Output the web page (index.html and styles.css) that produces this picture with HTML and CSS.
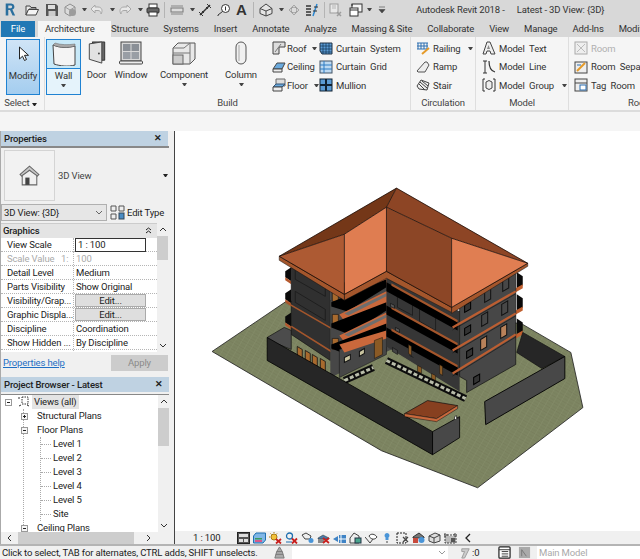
FILE: index.html
```html
<!DOCTYPE html>
<html lang="en">
<head>
<meta charset="utf-8">
<title>Autodesk Revit 2018</title>
<link rel="stylesheet" href="styles.css">
</head>
<body>
<header class="titlebar">
  <div class="qat">
    <svg class="q m6 wide" viewBox="0 0 14 16"><path d="M2 1h6.500a3.600 3.600 0 0 1 1.200 7L13 15h-3L7 8.500H5V15H2z" fill="#2a6f9e"/><path d="M5 3.400h3a1.500 1.500 0 0 1 0 3H5z" fill="#d8d8d8"/></svg>
    <svg class="q" viewBox="0 0 14 14"><path d="M1 3h4l1 1.500h5V6H4L1 12z" fill="#e8e8e8" stroke="#444"/><path d="M3.500 6.500H13.500L11 12H1z" fill="#f4f4f4" stroke="#444"/></svg>
    <svg class="q m4" viewBox="0 0 14 14"><path d="M1 1h10l2 2v10H1z" fill="#555"/><rect x="3" y="2" width="7" height="4" fill="#ddd"/><rect x="3.500" y="8" width="7" height="5" fill="#ccc"/></svg>
    <svg class="q m5 dim" viewBox="0 0 14 14"><path d="M2 4l5-3 5 3v6l-5 3-5-3z" fill="#ddd" stroke="#777"/><path d="M2 4l5 3 5-3M7 7v6" fill="none" stroke="#888"/><circle cx="9.500" cy="9.500" r="3.500" fill="#888"/></svg>
    <span class="arrow"></span>
    <svg class="q dim" viewBox="0 0 14 14"><path d="M5 2L1 6l4 4V7.500h3a3 3 0 0 1 3 3.500c2-3 1-7-3-7H5z" fill="#eee" stroke="#999"/></svg>
    <span class="arrow"></span>
    <svg class="q dim" viewBox="0 0 14 14"><path d="M9 2l4 4-4 4V7.500H6a3 3 0 0 0-3 3.500C1 8 2 4 6 4h3z" fill="#eee" stroke="#999"/></svg>
    <span class="arrow"></span>
    <svg class="q m4" viewBox="0 0 14 14"><rect x="3" y="1" width="8" height="4" fill="#fff" stroke="#333"/><rect x="1" y="5" width="12" height="5" rx="1" fill="#666" stroke="#333"/><rect x="3" y="9" width="8" height="4" fill="#fff" stroke="#333"/></svg>
    <span class="sep"></span>
    <svg class="q" viewBox="0 0 14 14"><path d="M1 3h12M1 11h12" stroke="#888" fill="none"/><rect x="1" y="5" width="12" height="4" fill="#ddd" stroke="#777"/></svg>
    <span class="arrow m3"></span>
    <svg class="q m5" viewBox="0 0 14 14"><path d="M2 12L12 2" stroke="#333" stroke-width="1.500"/><path d="M1 9l4 4M9 1l4 4M4 8l2 2M8 4l2 2" stroke="#333"/></svg>
    <svg class="q m5" viewBox="0 0 14 14"><circle cx="8.500" cy="5.500" r="4" fill="#fff" stroke="#333"/><path d="M8.500 3.500v4" stroke="#333"/><path d="M5.500 8.500L1 12v1" stroke="#333" fill="none"/></svg>
    <span class="bigA">A</span>
    <span class="sep"></span>
    <svg class="q" viewBox="0 0 14 14"><path d="M1 5.500L7 1l6 4.500v5L7 13l-6-2.500z" fill="#e4e4e4" stroke="#444"/><path d="M1 5.500L7 8l6-2.500M7 8v5" fill="none" stroke="#444"/></svg>
    <span class="arrow m3"></span>
    <svg class="q m4 dim" viewBox="0 0 14 14"><path d="M7 2l5 5-5 5-5-5z" fill="#eee" stroke="#999"/><circle cx="7" cy="7" r="3" fill="#ddd" stroke="#888"/></svg>
    <svg class="q m5" viewBox="0 0 14 14"><path d="M1 3h5M1 6h5M1 9h5M1 12h5" stroke="#333" stroke-width="1.300"/><path d="M8 13L12 1" stroke="#2b86d0" stroke-width="1.500"/><path d="M9 4h4M8 8h4" stroke="#333"/></svg>
    <span class="sep m4"></span>
    <svg class="q dim" viewBox="0 0 14 14"><rect x="1" y="1" width="8" height="9" fill="#eee" stroke="#888"/><path d="M3 3h4M3 5h4" stroke="#aaa"/><path d="M8 9l4 4M12 9l-4 4" stroke="#888" stroke-width="1.500"/></svg>
    <svg class="q m4" viewBox="0 0 14 14"><rect x="3" y="1" width="10" height="8" fill="#f4f4f4" stroke="#333"/><rect x="1" y="5" width="8" height="8" fill="#fff" stroke="#333"/><path d="M1 7h8M3 1v2" stroke="#333"/></svg>
    <span class="arrow m6"></span>
    <svg class="q cust" viewBox="0 0 8 8"><path d="M1 1h6M1 3.500h6L4 7z" fill="#444" stroke="#444" stroke-width=".6"/></svg>
  </div>
  <div class="title"><span>Autodesk Revit 2018 -</span><span>Latest - 3D View: {3D}</span></div>
</header>

<nav class="tabs">
  <span class="tab file">File</span>
  <span class="tab active">Architecture</span>
  <span class="tab">Structure</span>
  <span class="tab">Systems</span>
  <span class="tab">Insert</span>
  <span class="tab">Annotate</span>
  <span class="tab">Analyze</span>
  <span class="tab">Massing &amp; Site</span>
  <span class="tab">Collaborate</span>
  <span class="tab">View</span>
  <span class="tab">Manage</span>
  <span class="tab">Add-Ins</span>
  <span class="tab">Modify</span>
</nav>

<section class="ribbon">
  <div class="panel p-select">
    <div class="panel-body">
      <div class="modify">
        <svg class="cursor" viewBox="0 0 11 16"><path d="M1.500 1v12l3-2.800 2 4.300 2-1-2-4.200h4z" fill="#fff" stroke="#222"/></svg>
        <span>Modify</span>
      </div>
    </div>
    <div class="panel-label">Select <i class="arrow dark"></i></div>
  </div>
  <div class="panel p-build">
    <div class="panel-body">
      <div class="wall">
        <div class="wall-top">
          <svg viewBox="0 0 24 24" class="big"><path d="M1 3c7 3 15 3 22 1v19c-7 2-15 1-21-1z" fill="#f4f4f4" stroke="#444"/><path d="M1 3l2-2c6 2 13 2 20 1v2c-7 2-15 2-22-1z" fill="#aaa" stroke="#666" stroke-width=".5"/></svg>
        </div>
        <div class="wall-bot"><span>Wall</span><i class="arrow"></i></div>
      </div>
      <div class="tool t-door">
        <svg viewBox="0 0 18 26" class="big tall"><path d="M4 1h13v19H14z" fill="#666" stroke="#333"/><path d="M1 3l13-2v22L1 19z" fill="#e2e2e2" stroke="#444"/><circle cx="11" cy="13" r="1" fill="#444"/></svg>
        <span>Door</span>
      </div>
      <div class="tool t-window">
        <svg viewBox="0 0 24 24" class="big"><rect x="2" y="1" width="20" height="19" fill="#d8d8d8" stroke="#444"/><rect x="4" y="3" width="7.500" height="7" fill="#8a8f96"/><rect x="12.500" y="3" width="7.500" height="7" fill="#8a8f96"/><rect x="4" y="11" width="7.500" height="7" fill="#999ea5"/><rect x="12.500" y="11" width="7.500" height="7" fill="#999ea5"/><rect x="0.500" y="20" width="23" height="3" rx="1" fill="#eee" stroke="#444"/></svg>
        <span>Window</span>
      </div>
      <div class="tool t-comp">
        <svg viewBox="0 0 24 24" class="big"><path d="M1 7l5-5h17v16l-5 5H1z" fill="#e8e8e8" stroke="#555"/><path d="M6 12h12V2M1 12l5 0M18 12v11" fill="none" stroke="#777"/><path d="M1 7h11l6-5" fill="none" stroke="#777"/><rect x="1" y="14" width="10" height="9" fill="#ccc" stroke="#666"/></svg>
        <span>Component</span><i class="arrow"></i>
      </div>
      <div class="tool t-col">
        <svg viewBox="0 0 12 24" class="big thin"><rect x="1" y="1" width="10" height="22" rx="5" fill="#f0f0f0" stroke="#555"/><rect x="3" y="4" width="2" height="16" fill="#ccc"/></svg>
        <span>Column</span><i class="arrow"></i>
      </div>
      <div class="stack s-roof">
        <div class="small"><svg class="si" viewBox="0 0 14 14"><path d="M1 1h12v5H7v7H1z" fill="#ddd" stroke="#444"/><path d="M3 11L9 3" stroke="#777"/></svg><span>Roof</span><i class="arrow"></i></div>
        <div class="small"><svg class="si" viewBox="0 0 14 14"><path d="M1 9l4-6h8l-3 6z" fill="#6aa9dc" stroke="#444"/><path d="M1 9h9v3H1z" fill="#eee" stroke="#444"/></svg><span>Ceiling</span></div>
        <div class="small"><svg class="si" viewBox="0 0 14 14"><path d="M4 1h9v7H4z" fill="#ddd" stroke="#666"/><path d="M1 9l3-3h9l-3 3z" fill="#6aa9dc" stroke="#357"/><path d="M1 9h9v4H1z" fill="#eee" stroke="#444"/></svg><span>Floor</span><i class="arrow"></i></div>
      </div>
      <div class="stack s-curtain">
        <div class="small"><svg class="si" viewBox="0 0 14 14"><path d="M1 2h12v11H3l-2-3z" fill="#5b9bd5" stroke="#234"/><path d="M4 2v11M7 2v11M10 2v11M1 5h12M1 8h12M2 11h11" stroke="#135" stroke-width=".7"/></svg><span>Curtain &nbsp;System</span></div>
        <div class="small"><svg class="si" viewBox="0 0 14 14"><rect x="1" y="1" width="12" height="12" fill="#bcd9f2" stroke="#456"/><path d="M5 1v12M1 5h12M1 9h12" stroke="#2e7cc4"/></svg><span>Curtain &nbsp;Grid</span></div>
        <div class="small"><svg class="si" viewBox="0 0 14 14"><rect x="1" y="1" width="12" height="12" fill="#5b9bd5" stroke="#123"/><path d="M7 1v12M1 7h12" stroke="#123" stroke-width="2"/></svg><span>Mullion</span></div>
      </div>
    </div>
    <div class="panel-label">Build</div>
  </div>
  <div class="panel p-circ">
    <div class="panel-body">
      <div class="stack">
        <div class="small"><svg class="si" viewBox="0 0 14 14"><path d="M1 2h11M1 5h11M2 2v6M5 2v6M8 2v6M11 2v6M1 8h11" stroke="#2d6fb0" fill="none"/><path d="M6 13l7-6" stroke="#e59a28" stroke-width="2"/></svg><span>Railing</span><i class="arrow"></i></div>
        <div class="small"><svg class="si" viewBox="0 0 14 14"><path d="M1 11L9 2h2l2 3-4 7H2z" fill="#eee" stroke="#555"/></svg><span>Ramp</span></div>
        <div class="small"><svg class="si" viewBox="0 0 14 14"><path d="M1 8l4-6 8 3-2 7-8-1z" fill="#eee" stroke="#444"/><path d="M4 4l7 6M6 3l6 5M3 6l6 6" stroke="#444"/></svg><span>Stair</span></div>
      </div>
    </div>
    <div class="panel-label">Circulation</div>
  </div>
  <div class="panel p-model">
    <div class="panel-body">
      <div class="stack s-model">
        <div class="small"><svg class="si" viewBox="0 0 14 14"><path d="M5 1h3l5 12H9l-1-3H5l-1 3H1z" fill="#eee" stroke="#444"/><path d="M5 8h3L6.500 4z" fill="#888"/></svg><span>Model &nbsp;Text</span></div>
        <div class="small"><svg class="si" viewBox="0 0 14 14"><path d="M3 1v12M1 1h4M1 13h4" stroke="#333" fill="none"/><path d="M7 1c0 6 2 10 6 11" stroke="#333" fill="none" stroke-width="1.200"/></svg><span>Model &nbsp;Line</span></div>
        <div class="small"><svg class="si" viewBox="0 0 14 14"><path d="M3 1H1v12h2M11 1h2v12h-2" stroke="#333" fill="none"/><path d="M4 4l3-1.500L10 4v6l-3 1.500L4 10z" fill="#eee" stroke="#444"/></svg><span>Model &nbsp;Group</span><i class="arrow"></i></div>
      </div>
    </div>
    <div class="panel-label">Model</div>
  </div>
  <div class="panel p-room">
    <div class="panel-body">
      <div class="stack">
        <div class="small off"><svg class="si" viewBox="0 0 14 14"><rect x="1" y="1" width="12" height="12" fill="#eee" stroke="#aaa"/><path d="M3 3l8 8M11 3l-8 8" stroke="#bbb"/></svg><span>Room</span></div>
        <div class="small"><svg class="si" viewBox="0 0 14 14"><rect x="1" y="2" width="12" height="11" fill="#eee" stroke="#444"/><path d="M3 11L11 3" stroke="#e59a28" stroke-width="2"/><path d="M3 5h4" stroke="#2d6fb0"/></svg><span>Room &nbsp;Separation</span></div>
        <div class="small"><svg class="si" viewBox="0 0 14 14"><rect x="1" y="1" width="12" height="12" fill="#eee" stroke="#444"/><path d="M1 5h12" stroke="#444"/><rect x="6" y="7" width="6" height="5" fill="#fff" stroke="#2d6fb0"/></svg><span>Tag &nbsp;Room</span></div>
      </div>
    </div>
    <div class="panel-label lab-room">Room &amp; Area</div>
  </div>
</section>
<div class="options"></div>

<main class="work">
  <aside class="side">
    <section class="props">
      <h2 class="pane-head">Properties <b class="close">✕</b></h2>
      <div class="type-sel">
        <div class="thumb">
          <svg viewBox="0 0 24 24"><path d="M3 11L12 3l9 8-2 2-7-6-7 6z" fill="#c8c8c8" stroke="#666"/><path d="M5 12l7-5 7 5v9H5z" fill="#f0f0f0" stroke="#666"/><rect x="8" y="14" width="4" height="7" fill="#444"/></svg>
        </div>
        <span class="type-name">3D View</span>
        <i class="arrow dark"></i>
      </div>
      <div class="selector">
        <div class="combo"><span>3D View: {3D}</span><svg class="chev" viewBox="0 0 8 5"><path d="M1 1l3 3 3-3" fill="none" stroke="#666"/></svg></div>
        <svg class="edit-ic" viewBox="0 0 15 15"><path d="M1 1h5v5H1zM9 1h5v5H9zM1 9h5v5H1z" fill="#eee" stroke="#555"/><rect x="9" y="8" width="5" height="6" fill="#4a8cc4" stroke="#345"/></svg>
        <span>Edit Type</span>
      </div>
      <div class="grid-wrap">
        <div class="grid">
          <div class="group">Graphics <svg class="dbl" viewBox="0 0 7 7"><path d="M1 3l2.500-2L6 3M1 6l2.500-2L6 6" fill="none" stroke="#222"/></svg></div>
          <div class="row"><span>View Scale</span><span class="val input">1 : 100</span></div>
          <div class="row mute"><span>Scale Value &nbsp;&nbsp;1:</span><span class="val">100</span></div>
          <div class="row"><span>Detail Level</span><span class="val">Medium</span></div>
          <div class="row"><span>Parts Visibility</span><span class="val">Show Original</span></div>
          <div class="row"><span>Visibility/Grap...</span><span class="val btn">Edit...</span></div>
          <div class="row"><span>Graphic Displa...</span><span class="val btn">Edit...</span></div>
          <div class="row"><span>Discipline</span><span class="val">Coordination</span></div>
          <div class="row"><span>Show Hidden ...</span><span class="val">By Discipline</span></div>
          <div class="row"><span>Default Analysi...</span><span class="val">None</span></div>
        </div>
        <div class="vscroll s-props">
          <svg class="sc" viewBox="0 0 8 5"><path d="M1 4l3-3 3 3" fill="none" stroke="#333"/></svg>
          <div class="track"><div class="thumbbar"></div></div>
          <svg class="sc" viewBox="0 0 8 5"><path d="M1 1l3 3 3-3" fill="none" stroke="#333"/></svg>
        </div>
      </div>
      <div class="help"><a href="#">Properties help</a><span class="apply">Apply</span></div>
    </section>

    <section class="browser">
      <h2 class="pane-head">Project Browser - Latest <b class="close">✕</b></h2>
      <div class="tree-wrap">
        <div class="tree">
          <div class="t t-root"><i class="box minus"></i><svg class="vi" viewBox="0 0 12 12"><path d="M4 1h6v7H4z" fill="none" stroke="#333" stroke-dasharray="1.500 1"/><path d="M1 1v2M1 10l2-1M11 10l-2-1" stroke="#333"/></svg><span class="sel">Views (all)</span></div>
          <div class="branch">
            <div class="t t1"><i class="box plus"></i><span>Structural Plans</span></div>
            <div class="t t1"><i class="box minus"></i><span>Floor Plans</span></div>
            <div class="leaves">
              <div class="t t2">Level 1</div>
              <div class="t t2">Level 2</div>
              <div class="t t2">Level 3</div>
              <div class="t t2">Level 4</div>
              <div class="t t2">Level 5</div>
              <div class="t t2">Site</div>
            </div>
            <div class="t t1"><i class="box minus"></i><span>Ceiling Plans</span></div>
          </div>
        </div>
        <div class="vscroll s-tree">
          <svg class="sc" viewBox="0 0 8 5"><path d="M1 4l3-3 3 3" fill="none" stroke="#333"/></svg>
          <div class="track"><div class="thumbbar"></div></div>
          <svg class="sc" viewBox="0 0 8 5"><path d="M1 1l3 3 3-3" fill="none" stroke="#333"/></svg>
        </div>
      </div>
      <div class="hscroll">
        <svg class="sh" viewBox="0 0 5 8"><path d="M4 1L1 4l3 3" fill="none" stroke="#333"/></svg>
        <div class="htrack"></div>
        <svg class="sh" viewBox="0 0 5 8"><path d="M1 1l3 3-3 3" fill="none" stroke="#333"/></svg>
      </div>
    </section>
  </aside>

  <section class="view">
    <svg class="canvas" viewBox="176 132 464 399" preserveAspectRatio="xMinYMin">
      <defs>
        <pattern id="hatch" width="6" height="6" patternUnits="userSpaceOnUse" patternTransform="rotate(30)">
          <rect width="6" height="6" fill="#7d8562"/>
          <path d="M0 .5H6M0 3.500H6" stroke="#757d5a" stroke-width=".6"/>
          <path d="M3 0V6" stroke="#868e6b" stroke-width=".5"/>
        </pattern>
        <g id="leftband">
          <path d="M340 315L387 292 392 294V304L347 324Z" fill="#c9683c"/>
          <path d="M345 314L387 294V297L349 316Z" fill="#6e6e6e"/>
          <path d="M332 324L387 303V311L350 335 332 328Z" fill="#000"/>
        </g>
        <g id="rightband">
          <path d="M387 283L458 322V331L387 292Z" fill="#000"/>
          <path d="M392 284L458 320.500V323L392 286.500Z" fill="#a4562c"/>
        </g>
        <g id="sidebal">
          <path d="M517 273L523 277V286L517 291Z" fill="#0a0a0a"/>
          <path d="M516 289L523 285V289L516 293Z" fill="#c2602f"/>
        </g>
        <g id="towerbal">
          <path d="M286 272L292 268V282L286 278Z" fill="#0a0a0a"/>
          <path d="M286 278L292 282V285L286 281Z" fill="#b5582d"/>
        </g>
      </defs>

      <path d="M213 352L287 302 400 300 523 325 571 353 583 408 478 488 382 451Z" fill="url(#hatch)" stroke="#1e1e1e" stroke-width=".8"/>

      <use href="#sidebal"/><use href="#sidebal" y="22"/><use href="#sidebal" y="46"/>
      <use href="#towerbal"/><use href="#towerbal" y="22"/><use href="#towerbal" y="45"/>

      <path d="M523 333L565 357 542 369 517 353Z" fill="#262626" stroke="#111" stroke-width=".7"/>

      <path d="M292 262L331 287V361L292 335Z" fill="#303030" stroke="#111" stroke-width=".7"/>
      <path d="M296 268L326 286V297L296 280ZM296 292L326 310V321L296 303Z" fill="none" stroke="#1a1a1a" stroke-width=".8"/>
      <path d="M287 303L332 329M292 327L332 352" stroke="#a4562c" stroke-width="1.600" fill="none"/>

      <path d="M331 287L392 270V350L331 378Z" fill="#474747"/>
      <path d="M333 291h6v11h-6zM333 315h6v11h-6zM333 339h6v11h-6z" fill="#a86a2e" stroke="#111" stroke-width=".6"/>
      <path d="M345 296L392 275V283L350 305Z" fill="#c9683c"/>
      <path d="M332 303L387 280V288L348 312 332 307Z" fill="#000"/>
      <use href="#leftband"/>
      <use href="#leftband" y="21"/>
      <path d="M340 350L387 335V355L340 378Z" fill="#474747" stroke="#111" stroke-width=".5"/>
      <path d="M340 345L387 331V339L345 353Z" fill="#c9683c"/>
      <path d="M345 358l6-3v5l-6 3zM360 352l5-3v5l-5 3z" fill="#c9c4a0" stroke="#111"/>
      <path d="M375 341l8-3v17l-8 4z" fill="#8a5a25" stroke="#111" stroke-width=".5"/>

      <path d="M387 272L460 312V392L387 347Z" fill="#363636"/>
      <path d="M398 296l15 8v12l-15-8zM420 309l16 9v13l-16-9z" fill="none" stroke="#1a1a1a" stroke-width=".8"/>
      <use href="#rightband"/>
      <use href="#rightband" y="23"/>
      <use href="#rightband" y="45"/>
      <path d="M391 304l4 2v3l-4-2zM396 328l4 2v3l-4-2z" fill="#555" stroke="#000" stroke-width=".5"/>
      <path d="M409 345l3 2v9l-3-2zM440 365l3 2v9l-3-2zM418 366l4 2v6l-4-2zM432 374l4 2v6l-4-2z" fill="#8a5a25" stroke="#111" stroke-width=".5"/>
      <path d="M393 348l5 3v4l-5-3zM414 358l-4-2" fill="#444" stroke="#111" stroke-width=".6"/>

      <path d="M460 304L516 271V365L467 393V381L460 377Z" fill="#474747" stroke="#111" stroke-width=".7"/>
      <path d="M453 328L516 292M453 351L516 314M453 374L516 335" stroke="#bb5e32" stroke-width="2.200" fill="none"/>
      <path d="M453 329L516 293M453 352L516 315M453 375L516 336" stroke="#111" stroke-width=".6" fill="none" transform="translate(0 1.500)"/>
      <path d="M465 306l6-3.500v7l-6 3.500zM465 329l6-3.500v7l-6 3.500zM467 352l6-3.500v7l-6 3.500zM474 378l6-3.500v7l-6 3.500z" fill="#333" stroke="#000"/>
      <path d="M485 292l6-3.500v11l-6 3.500zM503 281l6-3.500v11l-6 3.500zM482 316l6-3.500v11l-6 3.500zM502 305l6-3.500v11l-6 3.500z" fill="none" stroke="#111"/>
      <path d="M481 340l6-3.500v11l-6 3.500zM501 328l6-3.500v11l-6 3.500z" fill="#b9825a" stroke="#111"/>

      <path d="M345 381L374 368" stroke="#0d0d0d" stroke-width="7" fill="none"/>
      <path d="M345 381L374 368" stroke="#b9bdaa" stroke-width="3" stroke-dasharray="4 2" fill="none"/>
      <path d="M387 361L466 399" stroke="#0d0d0d" stroke-width="7" fill="none"/>
      <path d="M387 361L466 399" stroke="#b9bdaa" stroke-width="3" stroke-dasharray="4 2" fill="none"/>

      <path d="M345 295L387 272 452 308V313L387 279 345 301Z" fill="#a4562c" stroke="#111" stroke-width=".5"/>
      <path d="M280 257L345 295V301L280 261Z" fill="#a4562c" stroke="#111" stroke-width=".5"/>
      <path d="M452 308L528 264V267L452 314Z" fill="#a4562c" stroke="#111" stroke-width=".5"/>
      <path d="M397 189L280 257 345 235 387 208Z" fill="#743718"/>
      <path d="M397 189L387 208 452 239 528 264Z" fill="#8d4525"/>
      <path d="M280 257L345 235V295Z" fill="#ad5a33"/>
      <path d="M345 235L387 208V272L345 295Z" fill="#df7d51"/>
      <path d="M387 208L452 239V308L387 272Z" fill="#8c4626"/>
      <path d="M452 239L528 264 452 308Z" fill="#e07e52"/>
      <path d="M397 189L280 257 345 295 387 272 452 308 528 264ZM397 189L387 208 345 235 280 257M387 208L452 239 528 264M345 235V295M387 208V272M452 239V308" fill="none" stroke="#1c0d06" stroke-width=".8" stroke-linejoin="round"/>

      <path d="M268 338L285 328 292 331V350L272 342Z" fill="#4c4c4c" stroke="#111" stroke-width=".7"/>
      <path d="M298 347l5 3v10l-5-3zM306 351l5 3v11l-5-3zM313 355l5 3v11l-5-3zM321 359l5 3v11l-5-3z" fill="#a86a2e" stroke="#111" stroke-width=".8"/>
      <path d="M268 338L433 432V455L268 361Z" fill="#262626" stroke="#000" stroke-width=".8"/>
      <path d="M433 432L460 417V438L433 455Z" fill="#484848" stroke="#000" stroke-width=".8"/>
      <path d="M455 420v-3l2-1v3l3-1" fill="#fff" stroke="#111" stroke-width=".7"/>
      <path d="M405 414L428 401 458 406 437 419Z" fill="#874020" stroke="#111" stroke-width=".7"/>
      <path d="M405 414L437 419 458 406V409L437 422 405 417Z" fill="#c9683c" stroke="#111" stroke-width=".5"/>

      <path d="M485 402L565 357V379L486 425Z" fill="#484848" stroke="#000" stroke-width=".9"/>
    </svg>
    <div class="viewbar">
      <span class="scale">1 : 100</span>
      <svg class="vb" viewBox="0 0 13 12"><rect x="0.500" y="0.500" width="12" height="11" fill="#555" stroke="#222"/><path d="M2 2h9v3H2zM2 7h4v3H2zM7 7h4v3H7z" fill="#ddd"/></svg>
      <svg class="vb" viewBox="0 0 13 12"><path d="M.5 4L3 1h9.500v7L10 11H.5z" fill="#7fb6e6" stroke="#1f6fb0"/><path d="M2 6h7v1.500H2z" fill="#3c9a5f"/><path d="M2 8h7v2H2z" fill="#d85a8a"/></svg>
      <svg class="vb" viewBox="0 0 13 12"><circle cx="5" cy="5" r="3" fill="#f3c23a" stroke="#a77a10"/><path d="M5 0v1M0 5h1M1.500 1.500l1 1M8 1.500l-1 1" stroke="#a77a10"/><path d="M7 7l5 4.500M12 7l-5 4.500" stroke="#c8201e" stroke-width="1.800"/></svg>
      <svg class="vb" viewBox="0 0 13 12"><circle cx="4.500" cy="4" r="3" fill="none" stroke="#1f6fb0" stroke-width="1.300"/><path d="M1 10h6" stroke="#1f6fb0"/><path d="M7 6.500l5 5M12 6.500l-5 5" stroke="#c8201e" stroke-width="1.800"/></svg>
      <svg class="vb" viewBox="0 0 13 12"><path d="M1 3l4-2 5 3-1 3H4z" fill="#eee" stroke="#444"/><circle cx="10" cy="8.500" r="2.500" fill="#4a95d8"/></svg>
      <svg class="vb" viewBox="0 0 13 12"><path d="M1 6l5-3 6 3v1H1z" fill="#4a7ba8" stroke="#333" stroke-width=".5"/><rect x="1" y="7" width="6" height="4" fill="#888"/><path d="M6 6l6 5M12 6l-6 5" stroke="#c8201e" stroke-width="1.800"/></svg>
      <svg class="vb" viewBox="0 0 13 12"><path d="M0 7l5-3v6zM6 3h7v8H6z" fill="#3f83c5"/><path d="M8 3v8M6 7h7" stroke="#fff"/></svg>
      <svg class="vb" viewBox="0 0 13 12"><path d="M1 6l4-5 5 3v7H1z" fill="#eee" stroke="#444"/><rect x="6" y="6" width="6" height="5" fill="#4aa58e" stroke="#234"/></svg>
      <svg class="vb" viewBox="0 0 13 12"><path d="M0 5l5 6 3-4" fill="none" stroke="#444"/><path d="M4 4c2-3 6-2 8 1-2 3-6 3-8-1z" fill="#fff" stroke="#444"/></svg>
      <svg class="vb bulb" viewBox="0 0 6 12"><path d="M3 1a2.500 2.500 0 0 1 1.500 4.500V8h-3V5.500A2.500 2.500 0 0 1 3 1z" fill="#4a95d8"/><path d="M2 10h2" stroke="#444"/></svg>
      <svg class="vb" viewBox="0 0 13 12"><rect x="1" y="1" width="9" height="10" fill="#eee" stroke="#222" stroke-dasharray="2 1"/><path d="M7 5l5 5M12 5l-5 5" stroke="#444" stroke-width="1.300"/></svg>
      <svg class="vb" viewBox="0 0 13 12"><path d="M1 5l6-4 5 4v1H1z" fill="#777" stroke="#333"/><path d="M1 6h5v5H1z" fill="#c84a3c"/><circle cx="9.500" cy="8" r="3" fill="#4a95d8"/></svg>
      <svg class="vb" viewBox="0 0 13 12"><path d="M1 4l6-3 5 2v6l-6 2-5-2z" fill="#ddd" stroke="#444"/><path d="M1 4l5 2 6-3M6 6v5" fill="none" stroke="#444"/></svg>
      <svg class="vb" viewBox="0 0 13 12"><path d="M0 2h3v2H0zM10 2h3v2h-3zM3 3h7M1 4v7h11V4" fill="#bbb" stroke="#444" stroke-dasharray="2 1"/><rect x="7" y="6" width="4" height="4" fill="#555"/></svg>
      <svg class="lt" viewBox="0 0 6 10"><path d="M5 1L1 5l4 4" fill="none" stroke="#222" stroke-width="1.300"/></svg>
    </div>
  </section>
</main>

<footer class="status">
  <span class="msg">Click to select, TAB for alternates, CTRL adds, SHIFT unselects.</span>
  <svg class="st st-a" viewBox="0 0 14 14"><path d="M2 13l2-7 3-5 3 5 2 7z" fill="#aaa" stroke="#777"/><path d="M4 6h6M3 9h8" stroke="#777"/></svg>
  <div class="st-input"><svg class="chev" viewBox="0 0 8 5"><path d="M1 1l3 3 3-3" fill="none" stroke="#999"/></svg></div>
  <svg class="st st-b" viewBox="0 0 14 14"><path d="M3 3h8L6 13H3l3-7H3z" fill="#ccc" stroke="#999"/></svg>
  <span class="zero">:0</span>
  <svg class="st st-c" viewBox="0 0 14 14"><rect x="1" y="1" width="12" height="12" rx="1" fill="#fff" stroke="#222" stroke-width="1.300"/><path d="M1 4h12M4 6h7M4 8.500h7M4 11h7" stroke="#333"/></svg>
  <svg class="st st-d" viewBox="0 0 14 14"><rect x="1" y="1" width="12" height="12" fill="#aaa"/><path d="M4 11V4l5 7" stroke="#777" fill="none"/></svg>
  <div class="main-model">Main Model</div>
</footer>
</body>
</html>
```

FILE: styles.css
```css
* { box-sizing: border-box; }
html, body { margin: 0; width: 640px; height: 559px; overflow: hidden; }
body {
  font: 9.5px/1.2 Roboto, "Liberation Sans", sans-serif;
  letter-spacing: -.15px;
  color: #333;
  background: #f5f5f5;
  display: flex;
  flex-direction: column;
}
.arrow {
  display: inline-block;
  width: 5px;
  height: 3px;
  margin-right: 3px;
  border-left: 2.5px solid transparent;
  border-right: 2.5px solid transparent;
  border-top: 3px solid #444;
  flex: none;
}

/* title bar */
.titlebar {
  height: 19px;
  flex: none;
  background: #d8d8d8;
  display: flex;
  align-items: center;
  overflow: hidden;
}
.qat { display: flex; align-items: center; padding-left: 4px; width: 416px; flex: none; }
.q { width: 14px; height: 14px; flex: none; margin-right: 6px; }
.q.wide { width: 12px; height: 15px; margin-right: 9px; }
.q.m4 { margin-right: 4px; }
.q.m5 { margin-right: 5px; }
.q.dim { opacity: .75; }
.q.cust { width: 8px; height: 8px; margin: 0; }
.arrow.m3 { margin-right: 3px; }
.arrow.m6 { margin-right: 6px; }
.sep { width: 1px; height: 16px; background: #b4b4b4; margin-right: 5px; flex: none; }
.sep.m4 { margin-right: 4px; }
.bigA {
  font: bold 15px/15px "Liberation Sans", sans-serif;
  color: #333;
  width: 17px;
  flex: none;
}
.title { display: flex; gap: 12px; color: #333; white-space: nowrap; }

/* tabs */
.tabs {
  height: 18px;
  flex: none;
  background: #d8d8d8;
  display: flex;
  align-items: flex-end;
  padding-left: 1px;
  white-space: nowrap;
  overflow: hidden;
}
.tab { height: 16px; line-height: 16px; margin-right: 15px; color: #333; flex: none; }
.tab.file {
  width: 34px;
  margin-right: 3px;
  background: #2178b5;
  color: #fff;
  text-align: center;
}
.tab.active {
  width: 73px;
  margin-right: 0;
  padding-left: 7px;
  background: #f5f5f5;
}

/* ribbon */
.ribbon {
  height: 75px;
  flex: none;
  display: flex;
  background: #f5f5f5;
  border-bottom: 2px solid #dcdcdc;
  overflow: hidden;
}
.panel {
  display: flex;
  flex-direction: column;
  flex: none;
  border-right: 1px solid #dedede;
}
.panel-body { height: 58px; margin-top: 2px; display: flex; }
.panel-label { flex: 1; text-align: center; line-height: 12px; color: #444; }
.p-select { width: 45px; }
.p-build { width: 366px; }
.p-circ { width: 65px; }
.p-model { width: 93px; }
.p-room { width: 120px; border: 0; }
.lab-room { text-align: left; margin-left: 59px; white-space: nowrap; }

.modify {
  width: 34px;
  height: 56px;
  margin-left: 6px;
  border: 1px solid #1f82d2;
  background: linear-gradient(#d0e4f6, #a4cdef);
  display: flex;
  flex-direction: column;
  align-items: center;
  color: #333;
}
.cursor { width: 11px; height: 16px; margin: 6px 0 8px; }
.wall {
  width: 35px;
  height: 56px;
  margin-left: 1px;
  border: 1px solid #1f82d2;
  display: flex;
  flex-direction: column;
}
.wall-top { height: 29px; background: #c8e9f8; border-bottom: 1px solid #1f82d2; display: flex; justify-content: center; align-items: center; }
.wall-bot { flex: 1; background: #e5f3fb; display: flex; flex-direction: column; align-items: center; padding-top: 1px; }
.wall-bot .arrow { margin: 3px 0 0; }
.big { width: 24px; height: 24px; flex: none; }
.big.tall { width: 18px; height: 25px; }
.big.thin { width: 12px; height: 24px; }
.tool { display: flex; flex-direction: column; align-items: center; flex: none; padding-top: 2px; }
.tool span { margin-top: 4px; }
.t-door span { margin-top: 3px; }
.tool .arrow { margin: 3px 0 0; }
.t-door { width: 27px; margin-left: 2px; }
.t-window { width: 42px; }
.t-comp { width: 64px; }
.t-col { width: 50px; }
.stack { display: flex; flex-direction: column; flex: none; padding-left: 5px; }
.s-roof { width: 53px; padding-left: 6px; }
.s-roof .small { gap: 1px; }
.s-curtain { padding-left: 0; }
.s-model { padding-left: 6px; }
.small { height: 18.5px; display: flex; align-items: center; gap: 3px; white-space: nowrap; }
.small .arrow { margin-left: 5px; }
.si { width: 14px; height: 14px; flex: none; }
.small.off { color: #b0b0b0; }
.options { height: 19px; flex: none; background: #f5f5f5; }

/* main area */
.work { flex: 1; display: flex; min-height: 0; }
.side { width: 175px; flex: none; display: flex; flex-direction: column; background: #f0f0f0; border-right: 1px solid #444; }
.pane-head {
  margin: 0 4px 0 0;
  height: 15px;
  flex: none;
  background: #bfd2e2;
  font-size: 9.5px;
  font-weight: 500;
  line-height: 15px;
  padding: 0 4px 0 3px;
  color: #222;
  display: flex;
  justify-content: space-between;
}
.close { font-size: 9px; font-weight: bold; padding-right: 2px; }

.props { height: 246px; flex: none; display: flex; flex-direction: column; margin-right: 2px; border-left: 1px solid #aaa; }
.type-sel {
  height: 57px;
  flex: none;
  border-top: 2px solid #888;
  margin-right: 3px;
  display: flex;
  align-items: center;
  padding-left: 3px;
  color: #444;
}
.thumb { width: 51px; height: 51px; border: 1px solid #d4d4d4; background: #f2f2f2; display: flex; align-items: center; justify-content: center; flex: none; }
.thumb svg { width: 25px; height: 25px; }
.type-name { margin-left: 3px; flex: 1; }
.type-sel .arrow { margin-right: 1px; margin-left: 0; }
.arrow.dark { border-top-color: #222; }
.selector { height: 19px; flex: none; display: flex; align-items: center; white-space: nowrap; color: #222; }
.combo {
  width: 106px;
  height: 17px;
  background: #e6e6e6;
  border: 1px solid #b0b0b0;
  display: flex;
  align-items: center;
  justify-content: space-between;
  padding: 0 3px 0 2px;
  flex: none;
}
.chev { width: 8px; height: 5px; flex: none; }
.edit-ic { width: 15px; height: 15px; margin: 0 2px 0 3px; flex: none; }

.grid-wrap { display: flex; height: 129px; flex: none; margin-top: 1px; }
.grid { width: 156px; flex: none; overflow: hidden; background: #fff; border-top: 1px solid #ccc; }
.group { height: 14px; background: #e4e4e4; padding: 0 5px 1px 2px; color: #222; display: flex; justify-content: space-between; align-items: center; font-weight: 500; }
.dbl { width: 7px; height: 7px; }
.row {
  display: grid;
  grid-template-columns: 73px 72px;
  height: 14px;
  line-height: 13px;
  border-bottom: 1px dotted #b5b5b5;
  white-space: nowrap;
  color: #222;
}
.row > span:first-child { padding-left: 6px; border-right: 1px dotted #b5b5b5; overflow: hidden; }
.val { padding-left: 2px; }
.val.input { border: 1px solid #333; background: #fff; margin-left: 1px; height: 14px; line-height: 12px; }
.val.btn { background: #dedede; border: 1px solid #aaa; text-align: center; margin: 0 0 0 1px; height: 13px; line-height: 11px; padding: 0; }
.row.mute { color: #aaa; }

.vscroll { width: 11px; flex: none; display: flex; flex-direction: column; align-items: center; background: #f0f0f0; }
.sc { width: 8px; height: 5px; margin: 4px 0; flex: none; }
.track { flex: 1; width: 100%; }
.thumbbar { background: #cdcdcd; height: 100%; }
.s-props .thumbbar { height: 24px; }
.s-tree .thumbbar { height: 38px; }

.help { flex: 1; display: flex; justify-content: space-between; align-items: center; padding: 0 3px 3px 2px; margin-right: 1px; }
.help a { color: #1f6fc4; }
.apply { width: 57px; height: 16px; background: #cccccc; color: #8a8a8a; text-align: center; line-height: 16px; }

.browser { flex: 1; display: flex; flex-direction: column; min-height: 0; margin-right: 1px; border-left: 1px solid #aaa; }
.tree-wrap { flex: 1; display: flex; min-height: 0; margin: 2px 4px 0 0; border-top: 1px solid #888; }
.tree { flex: 1; background: #fff; overflow: hidden; color: #222; }
.t { height: 14px; line-height: 14px; white-space: nowrap; display: flex; align-items: center; flex: none; position: relative; }
.t-root { padding-left: 4px; }
.box { width: 7px; height: 7px; border: 1px solid #999; background: #fff; flex: none; position: relative; }
.box::before { content: ""; position: absolute; left: 1px; top: 2px; width: 3px; height: 1px; background: #222; }
.box.plus::after { content: ""; position: absolute; left: 2px; top: 1px; width: 1px; height: 3px; background: #222; }
.vi { width: 12px; height: 12px; margin: 0 2px 0 6px; flex: none; }
.sel { background: #e4e4e4; padding: 0 2px; }
.branch { margin-left: 22px; border-left: 1px dotted #aaa; }
.t1 { margin-left: -3px; }
.t1 .box { margin-right: 11px; background: #f6f6f6; }
.t1 span { margin-left: -2px; }
.leaves { margin-left: 16px; border-left: 1px dotted #aaa; height: 84px; }
.t2 { padding-left: 12px; }
.t2::before { content: ""; position: absolute; left: 0; top: 7px; width: 10px; border-top: 1px dotted #aaa; }
.hscroll { height: 12px; flex: none; display: flex; align-items: center; margin-right: 4px; justify-content: space-between; background: #f0f0f0; padding: 0 18px 0 6px; }
.sh { width: 5px; height: 8px; flex: none; }
.htrack { height: 12px; width: 122px; background: #cdcdcd; margin: 0 12px 0 6px; }

.view { flex: 1; min-width: 0; display: flex; flex-direction: column; background: #fff; }
.canvas { flex: 1; min-height: 0; display: block; width: 100%; }
.viewbar {
  height: 13px;
  flex: none;
  background: #f0f0f0;
  display: flex;
  align-items: center;
  color: #222;
  padding-left: 18px;
  gap: 3px;
}
.scale { width: 41px; flex: none; }
.vb { width: 13px; height: 12px; flex: none; }
.vb.bulb { width: 6px; margin: 0 3px; }
.lt { width: 6px; height: 10px; margin-left: 5px; flex: none; }

/* status bar */
.status {
  height: 15px;
  flex: none;
  background: #f0f0f0;
  border-top: 2px solid #b4b4b4;
  display: flex;
  align-items: center;
  color: #222;
  white-space: nowrap;
}
.msg { width: 273px; padding-left: 2px; flex: none; }
.st { width: 13px; height: 13px; flex: none; }
.st-a { margin-right: 6px; }
.st-input { width: 156px; height: 13px; background: #fff; flex: none; display: flex; justify-content: flex-end; align-items: center; padding-right: 2px; margin-right: 11px; }
.zero { width: 26px; flex: none; }
.st-c { margin-right: 7px; }
.st-d { margin-right: 6px; }
.main-model { flex: 1; height: 13px; background: #fff; color: #aaa; padding-left: 2px; line-height: 13px; }
```
